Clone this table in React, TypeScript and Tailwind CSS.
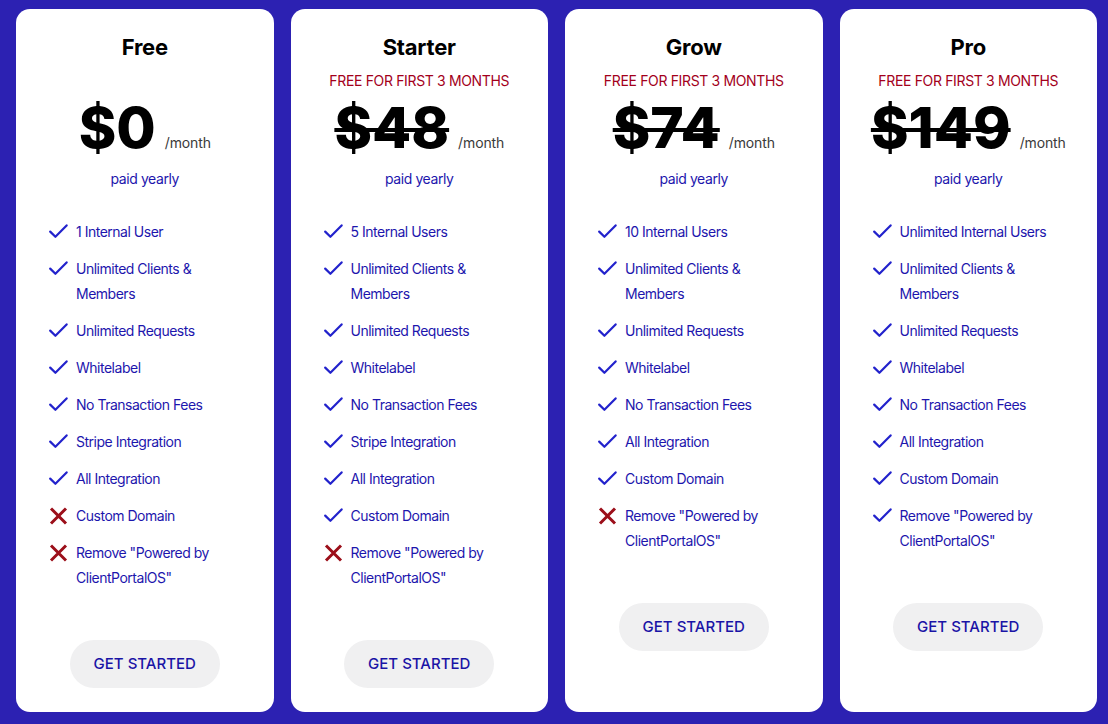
import React from "react";

type Feature = { ok: boolean; lines: string[] };

type Plan = {
  name: string;
  promo?: string;
  price: string;
  strike: boolean;
  features: Feature[];
};

const f = (ok: boolean, ...lines: string[]): Feature => ({ ok, lines });

const plans: Plan[] = [
  {
    name: "Free",
    price: "$0",
    strike: false,
    features: [
      f(true, "1 Internal User"),
      f(true, "Unlimited Clients &", "Members"),
      f(true, "Unlimited Requests"),
      f(true, "Whitelabel"),
      f(true, "No Transaction Fees"),
      f(true, "Stripe Integration"),
      f(true, "All Integration"),
      f(false, "Custom Domain"),
      f(false, 'Remove "Powered by', 'ClientPortalOS"'),
    ],
  },
  {
    name: "Starter",
    promo: "FREE FOR FIRST 3 MONTHS",
    price: "$48",
    strike: true,
    features: [
      f(true, "5 Internal Users"),
      f(true, "Unlimited Clients &", "Members"),
      f(true, "Unlimited Requests"),
      f(true, "Whitelabel"),
      f(true, "No Transaction Fees"),
      f(true, "Stripe Integration"),
      f(true, "All Integration"),
      f(true, "Custom Domain"),
      f(false, 'Remove "Powered by', 'ClientPortalOS"'),
    ],
  },
  {
    name: "Grow",
    promo: "FREE FOR FIRST 3 MONTHS",
    price: "$74",
    strike: true,
    features: [
      f(true, "10 Internal Users"),
      f(true, "Unlimited Clients &", "Members"),
      f(true, "Unlimited Requests"),
      f(true, "Whitelabel"),
      f(true, "No Transaction Fees"),
      f(true, "All Integration"),
      f(true, "Custom Domain"),
      f(false, 'Remove "Powered by', 'ClientPortalOS"'),
    ],
  },
  {
    name: "Pro",
    promo: "FREE FOR FIRST 3 MONTHS",
    price: "$149",
    strike: true,
    features: [
      f(true, "Unlimited Internal Users"),
      f(true, "Unlimited Clients &", "Members"),
      f(true, "Unlimited Requests"),
      f(true, "Whitelabel"),
      f(true, "No Transaction Fees"),
      f(true, "All Integration"),
      f(true, "Custom Domain"),
      f(true, 'Remove "Powered by', 'ClientPortalOS"'),
    ],
  },
];

function CheckIcon() {
  return (
    <svg width="19" height="15" viewBox="0 0 19 15" fill="none" className="shrink-0">
      <path
        d="M1.2 7.6 L6.4 12.8 L17.6 1.4"
        stroke="#2222cc"
        strokeWidth="2.2"
        strokeLinecap="round"
        strokeLinejoin="round"
      />
    </svg>
  );
}

function XIcon() {
  return (
    <svg width="19" height="18" viewBox="0 0 19 18" fill="none" className="shrink-0">
      <path
        d="M2 1.5 L17 16.5 M17 1.5 L2 16.5"
        stroke="#9c0f1a"
        strokeWidth="3"
        strokeLinecap="butt"
      />
    </svg>
  );
}

function Card({ plan }: { plan: Plan }) {
  return (
    <div className="flex-1 bg-white rounded-[14px] flex flex-col items-center pt-6">
      <h2 className="text-[22px] leading-[28px] font-bold text-black tracking-[-0.01em]">
        {plan.name}
      </h2>
      <div className="mt-[10px] h-5 text-[14px] leading-5 text-[#a3001b] tracking-[-0.025em]">
        {plan.promo ?? ""}
      </div>
      <div className="mt-[9px] flex items-baseline">
        <span
          className={
            plan.strike
              ? "text-[57px] leading-[56px] font-extrabold text-black line-through decoration-[length:4px]"
              : "text-[57px] leading-[56px] font-extrabold text-black"
          }
        >
          {plan.price}
        </span>
        <span className="ml-[9px] mb-[2px] text-[14px] text-[#3a3a3a] tracking-[-0.01em]">/month</span>
      </div>
      <div className="mt-[13px] text-[14px] leading-5 text-[#1d16ad] tracking-[-0.03em]">
        paid yearly
      </div>
      <ul className="mt-[30px] self-stretch pl-[33px] flex flex-col gap-3">
        {plan.features.map((ft, i) => (
          <li key={i} className="flex items-start gap-[8px]">
            <div className="h-[25px] w-[19px] flex items-center">
              {ft.ok ? <CheckIcon /> : <XIcon />}
            </div>
            <div className="text-[14px] leading-[25px] text-[#1d16ad] tracking-[-0.035em]">
              {ft.lines.map((l, j) => (
                <div key={j}>{l}</div>
              ))}
            </div>
          </li>
        ))}
      </ul>
      <button className="mt-[50px] w-[150px] h-12 rounded-full bg-[#f0f0f1] text-[15px] font-medium text-[#1a14a6]">
        GET STARTED
      </button>
    </div>
  );
}

export default function App() {
  return (
    <div
      className="w-full h-[724px] bg-[#2c21b2] flex gap-[17px] pl-4 pr-[11px] pt-[9px] pb-[12px]"
      style={{ fontFamily: "Inter, 'Noto Sans', sans-serif" }}
    >
      {plans.map((p) => (
        <Card key={p.name} plan={p} />
      ))}
    </div>
  );
}
